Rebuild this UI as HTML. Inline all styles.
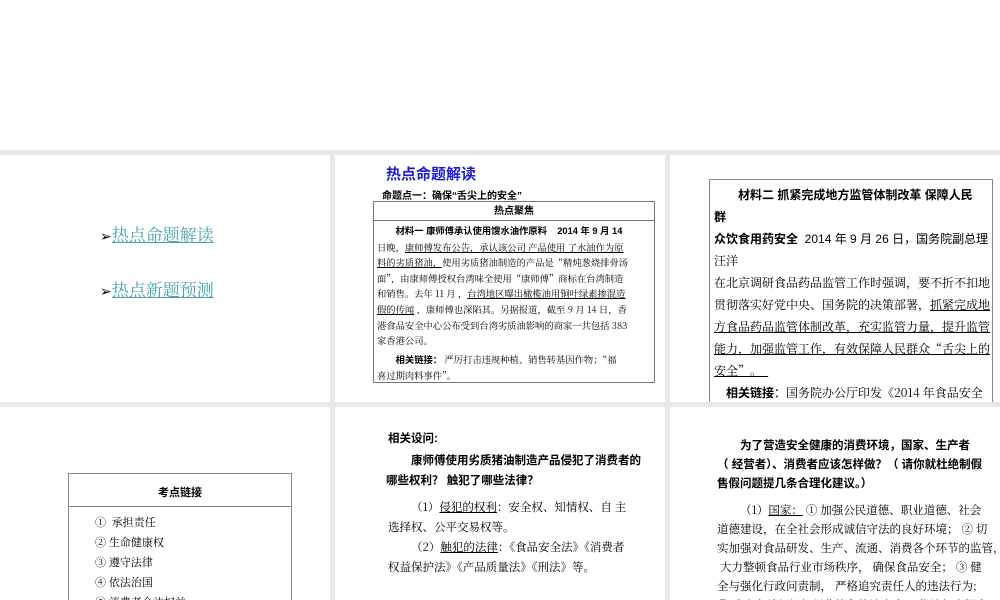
<!DOCTYPE html>
<html><head><meta charset="utf-8"><style>
*{margin:0;padding:0;box-sizing:border-box}
body{width:1000px;height:600px;background:#fff;position:relative;overflow:hidden;font-family:"Liberation Sans","Noto Sans CJK SC",sans-serif;color:#000}
.band{position:absolute;left:0;top:150px;width:1000px;height:450px;background:#e8e8e8}
.p{position:absolute;background:#fff;overflow:hidden}
.a{position:absolute;white-space:nowrap}
.s{font-family:"Noto Serif CJK SC","Liberation Serif",serif}
u{text-decoration:underline}
</style></head><body>
<div class="band"></div>
<!-- panel 1 -->
<div class="p" style="left:0;top:155px;width:330px;height:247px">
 <div class="a" style="left:100px;top:66px;font-size:17px;color:#4aa3a8"><span style="color:#000;font-size:14px">➢</span><u class="s">热点命题解读</u></div>
 <div class="a" style="left:100px;top:121px;font-size:17px;color:#4aa3a8"><span style="color:#000;font-size:14px">➢</span><u class="s">热点新题预测</u></div>
</div>
<!-- panel 2 -->
<div class="p" style="left:335px;top:155px;width:330px;height:247px">
 <div class="a" style="left:51px;top:8px;font-size:15px;font-weight:bold;color:#1a1ad0">热点命题解读</div>
 <div class="a" style="left:47px;top:32px;font-size:10px;font-weight:bold">命题点一：确保“舌尖上的安全”</div>
 <div style="position:absolute;left:38px;top:46px;width:282px;height:182px;border:1px solid #777">
  <div style="height:19px;border-bottom:1px solid #777;text-align:center;font-size:10px;font-weight:bold;line-height:19px">热点聚焦</div>
  <div class="s" style="font-size:9.3px;line-height:15.6px;padding:2px 3px 0 3px;white-space:normal">
   <div style="text-indent:2em"><b style="font-family:'Liberation Sans','Noto Sans CJK SC',sans-serif">材料一 康师傅承认使用馊水油作原料 &nbsp;&nbsp;&nbsp;2014 年 9 月 14</b></div>
   <div>日晚，<u>康师傅发布公告，承认该公司 产品使用 了水油作为原</u></div>
   <div><u>料的劣质猪油，</u>使用劣质猪油制造的产品是“精炖葱烧排骨汤</div>
   <div>面”，由康师傅授权台湾味全使用“康师傅”商标在台湾制造</div>
   <div>和销售。去年 11 月 ，<u>台湾地区曝出橄榄油用铜叶绿素掺混造</u></div>
   <div><u>假的传闻</u> ，康师傅也深陷其。另据报道，截至 9 月 14 日，香</div>
   <div>港食品安全中心公布受到台湾劣质油影响的商家一共包括 383</div>
   <div>家香港公司。</div>
   <div style="margin-top:3px;text-indent:2em"><b style="font-family:'Liberation Sans','Noto Sans CJK SC',sans-serif">相关链接：</b> 严厉打击违规种植、销售转基因作物；“福</div>
   <div>喜过期肉料事件”。</div>
  </div>
 </div>
</div>
<!-- panel 3 -->
<div class="p" style="left:670px;top:155px;width:330px;height:247px">
 <div style="position:absolute;left:39px;top:24px;width:284px;height:260px;border:1px solid #888;padding:4px 4px 0 4px;font-size:12px;line-height:22px;white-space:nowrap">
  <div style="text-indent:2em;font-weight:bold">材料二 抓紧完成地方监管体制改革 保障人民</div>
  <div style="font-weight:bold">群</div>
  <div><b>众饮食用药安全</b> &nbsp;2014 年 9 月 26 日，国务院副总理</div>
  <div class="s">汪洋</div>
  <div class="s">在北京调研食品药品监管工作时强调，要不折不扣地</div>
  <div class="s">贯彻落实好党中央、国务院的决策部署，<u>抓紧完成地</u></div>
  <div class="s"><u>方食品药品监管体制改革，充实监管力量，提升监管</u></div>
  <div class="s"><u>能力，加强监管工作，有效保障人民群众“舌尖上的</u></div>
  <div class="s"><u>安全”。&nbsp;&nbsp;</u></div>
  <div style="text-indent:1em"><b>相关链接</b>：<span class="s">国务院办公厅印发《2014 年食品安全</span></div>
  <div class="s">重点工作安排》；APCE 食品安全政企高层对话系列</div>
 </div>
</div>
<!-- panel 4 -->
<div class="p" style="left:0;top:407px;width:330px;height:193px">
 <div style="position:absolute;left:68px;top:66px;width:224px;height:140px;border:1px solid #888">
  <div style="height:33px;border-bottom:1px solid #888;text-align:center;font-size:11px;font-weight:bold;line-height:38px">考点链接</div>
  <div class="s" style="padding:5px 0 0 26px;font-size:11px;line-height:20px">
   <div>① &nbsp;承担责任</div><div>② 生命健康权</div><div>③ 遵守法律</div><div>④ 依法治国</div><div>⑤ 消费者合法权益</div>
  </div>
 </div>
</div>
<!-- panel 5 -->
<div class="p" style="left:335px;top:407px;width:330px;height:193px">
 <div style="position:absolute;left:53px;top:22px;font-size:11.5px;line-height:20px;white-space:nowrap">
  <div style="font-weight:bold">相关设问:</div>
  <div style="font-weight:bold;text-indent:2em;margin-top:2px">康师傅使用劣质猪油制造产品侵犯了消费者的</div>
  <div style="font-weight:bold;margin-left:-2px">哪些权利？ 触犯了哪些法律？</div>
  <div class="s" style="text-indent:2em;margin-top:6px"> （1）<u>侵犯的权利</u>：安全权、知情权、自 主</div>
  <div class="s">选择权、公平交易权等。</div>
  <div class="s" style="text-indent:2em"> （2）<u>触犯的法律</u>：《食品安全法》《消费者</div>
  <div class="s">权益保护法》《产品质量法》《刑法》等。</div>
 </div>
</div>
<!-- panel 6 -->
<div class="p" style="left:670px;top:407px;width:330px;height:193px">
 <div style="position:absolute;left:47px;top:30px;font-size:11.5px;line-height:19px;white-space:nowrap">
  <div style="font-weight:bold;text-indent:2em">为了营造安全健康的消费环境，国家、生产者</div>
  <div style="font-weight:bold">（ 经营者）、消费者应该怎样做？（ 请你就杜绝制假</div>
  <div style="font-weight:bold">售假问题提几条合理化建议。）</div>
  <div class="s" style="text-indent:2em;margin-top:7px">（1）<u>国家：</u> ① 加强公民道德、职业道德、社会</div>
  <div class="s">道德建设，在全社会形成诚信守法的良好环境； ② 切</div>
  <div class="s">实加强对食品研发、生产、流通、消费各个环节的监管，</div>
  <div class="s">&nbsp;大力整顿食品行业市场秩序， 确保食品安全； ③ 健</div>
  <div class="s">全与强化行政问责制， 严格追究责任人的违法行为;</div>
  <div class="s">④ 政府有关部门加强监管和执法力度， 依法打击假宣</div>
 </div>
</div>
</body></html>
